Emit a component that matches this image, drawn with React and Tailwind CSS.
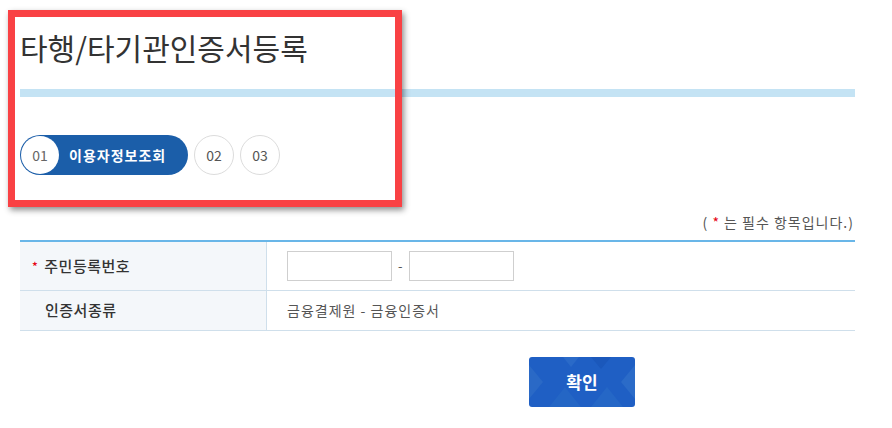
import { useState } from "react";

const font = { fontFamily: '"Noto Sans CJK KR", "Noto Sans", sans-serif' };

function StepCircle({ num }) {
  return (
    <div className="w-10 h-10 rounded-full border border-[#dcdcdc] bg-white flex items-center justify-center text-[14px] text-[#555]">
      {num}
    </div>
  );
}

export default function App() {
  const [front, setFront] = useState("");
  const [back, setBack] = useState("");

  return (
    <div className="relative w-[892px] h-[428px] bg-white overflow-hidden" style={font}>
      <div className="pl-5 pr-[37px]">
        <h1 className="pt-[27px] h-[89px] text-[30px] leading-[40px] text-[#333]">
          타행/타기관인증서등록
        </h1>
        <div className="h-2 bg-[#c4e3f4]" />

        <div className="mt-[38px] flex items-center gap-[6px]">
          <div className="flex items-center h-10 w-[168px] rounded-full bg-[#1b5ea9] pl-[1px]">
            <div className="w-[38px] h-[38px] rounded-full bg-white flex items-center justify-center text-[14px] text-[#666]">
              01
            </div>
            <span className="ml-[10px] text-[14px] font-bold text-white tracking-[1px]">이용자정보조회</span>
          </div>
          <StepCircle num="02" />
          <StepCircle num="03" />
        </div>

        <p className="mt-[38px] text-right text-[14px] leading-[18px] text-[#555] pr-[1px] tracking-[1px]">
          ( <span className="text-[#e60012]">*</span> 는 필수 항목입니다.)
        </p>

        <div className="mt-[9px] border-t-2 border-[#69b6e8]">
          <div className="flex h-[49px] border-b border-[#cfdfeb]">
            <div className="w-[247px] bg-[#f4f7fa] border-r border-[#cfdfeb] flex items-center pl-3 text-[15px] font-medium text-[#333] tracking-[0.5px]">
              <span className="text-[#e60012] text-[12px] mr-[6px]">*</span>주민등록번호
            </div>
            <div className="flex items-center pl-5 gap-[6px] text-[#555] text-[13px]">
              <input
                value={front}
                onChange={(e) => setFront(e.target.value)}
                className="w-[105px] h-[30px] border border-[#cfcfcf] outline-none px-2"
              />
              <span>-</span>
              <input
                value={back}
                onChange={(e) => setBack(e.target.value)}
                className="w-[105px] h-[30px] border border-[#cfcfcf] outline-none px-2"
              />
            </div>
          </div>
          <div className="flex h-10 border-b border-[#cfdfeb]">
            <div className="w-[247px] bg-[#f4f7fa] border-r border-[#cfdfeb] flex items-center pl-[25px] text-[15px] font-medium text-[#333] tracking-[0.5px]">
              인증서종류
            </div>
            <div className="flex items-center pl-5 text-[14px] text-[#555] tracking-[1px]">
              금융결제원 - 금융인증서
            </div>
          </div>
        </div>

        <div className="mt-[26px] flex">
          <button className="relative ml-[509px] w-[106px] h-[50px] rounded-[3px] overflow-hidden bg-[#1f5fc4] text-white text-[17px] font-bold">
            <svg className="absolute inset-0" width="106" height="50" viewBox="0 0 106 50">
              <path d="M0 8 L14 25 L0 42 Z" fill="#2a69c6" />
              <path d="M20 50 L36 30 L52 50 Z" fill="#2466c5" />
              <path d="M34 0 L50 0 L42 10 Z" fill="#2a6ac8" />
              <path d="M62 0 L82 0 L72 12 Z" fill="#1b58bb" />
              <path d="M78 30 L94 50 L62 50 Z" fill="#2567c6" />
              <path d="M92 25 L106 8 L106 42 Z" fill="#2b6bc8" />
            </svg>
            <span className="relative">확인</span>
          </button>
        </div>
      </div>

      <div className="absolute left-2 top-[10px] w-[394px] h-[197px] border-[7px] border-[#f94144] shadow-[2px_3px_6px_rgba(0,0,0,0.45)] pointer-events-none" />
    </div>
  );
}
